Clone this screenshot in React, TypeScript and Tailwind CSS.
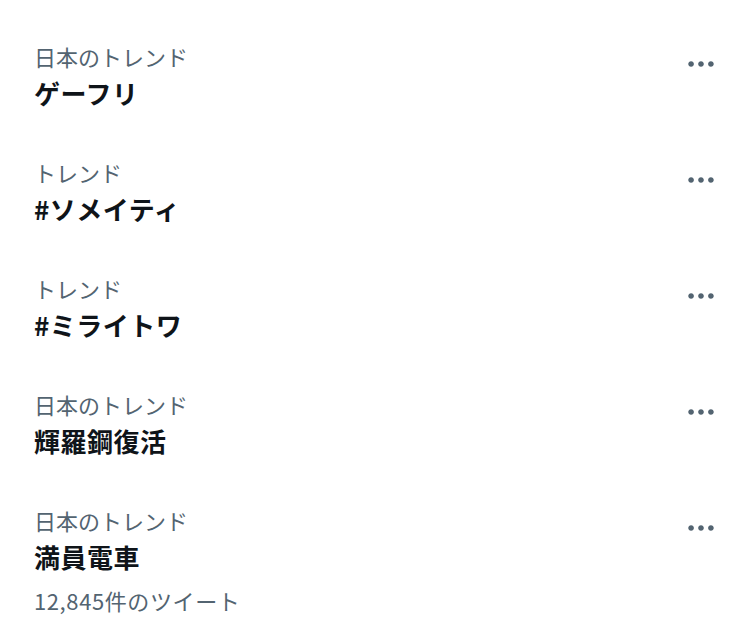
const trends = [
  { label: "日本のトレンド", title: "ゲーフリ" },
  { label: "トレンド", title: "#ソメイティ" },
  { label: "トレンド", title: "#ミライトワ" },
  { label: "日本のトレンド", title: "輝羅鋼復活" },
  { label: "日本のトレンド", title: "満員電車", count: "12,845件のツイート" },
];

const MoreIcon = () => (
  <svg viewBox="0 0 24 24" className="w-[34px] h-[34px] fill-[#536471]">
    <path d="M3 12c0-1.1.9-2 2-2s2 .9 2 2-.9 2-2 2-2-.9-2-2zm9 2c1.1 0 2-.9 2-2s-.9-2-2-2-2 .9-2 2 .9 2 2 2zm7 0c1.1 0 2-.9 2-2s-.9-2-2-2-2 .9-2 2 .9 2 2 2z" />
  </svg>
);

export default function App() {
  return (
    <div
      className="w-[750px] h-[643px] bg-white pt-[18px] overflow-hidden"
      style={{ fontFamily: '"Noto Sans CJK JP", "Noto Sans", sans-serif' }}
    >
      {trends.map((t, i) => (
        <div key={i} className="flex items-start justify-between pl-[34px] pr-[32px] pt-[23px] pb-[21px]">
          <div className="flex flex-col">
            <span className="text-[22px] leading-[30px] text-[#536471]">{t.label}</span>
            <span className="pt-[2px] text-[26px] leading-[40px] font-bold tracking-[0.5px] text-[#0f1419]">
              {t.title}
            </span>
            {t.count && (
              <span className="text-[22px] leading-[46px] tracking-[0.6px] text-[#536471]">
                {t.count}
              </span>
            )}
          </div>
          <div className="mt-[6px]">
            <MoreIcon />
          </div>
        </div>
      ))}
    </div>
  );
}
